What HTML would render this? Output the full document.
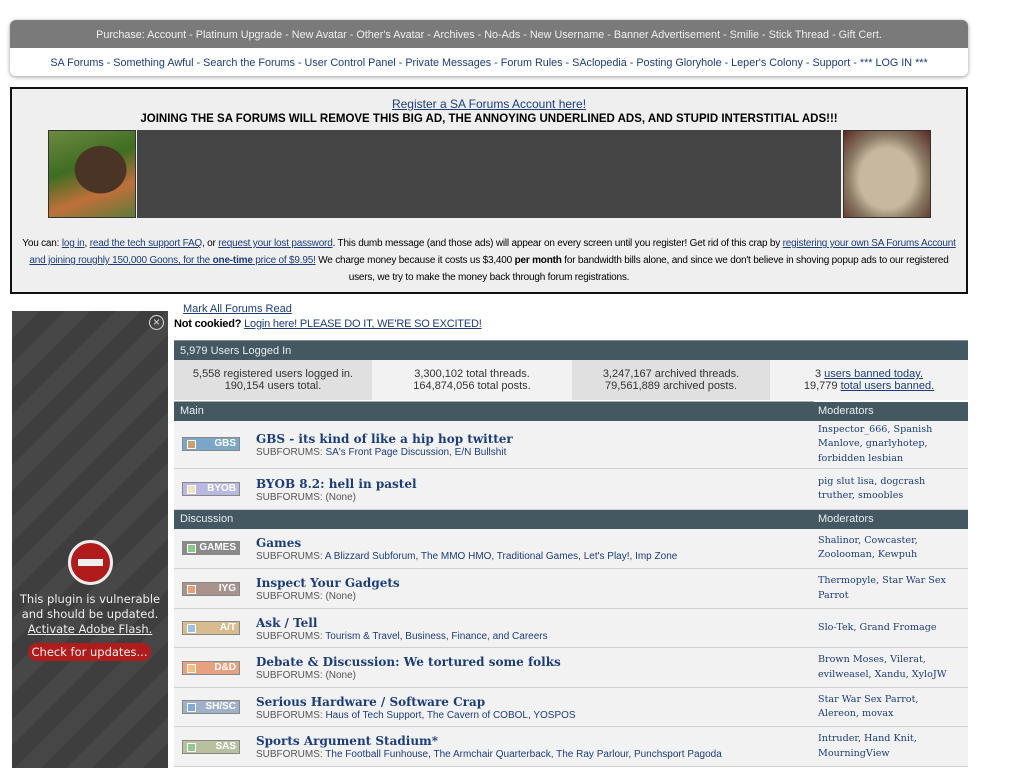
<!DOCTYPE html>
<html><head><meta charset="utf-8"><style>
*{margin:0;padding:0;box-sizing:border-box}
body{width:1024px;height:768px;overflow:hidden;background:#fff;font-family:"Liberation Sans",sans-serif;font-size:11px;color:#000;position:relative}
a{color:#1c3d7a}
.abs{position:absolute}
#nav{left:10px;top:20px;width:958px;height:56px;border-radius:6px;box-shadow:0 1px 4px rgba(0,0,0,.4);overflow:hidden}
#nav .t{height:28px;background:#7a7a7a;color:#f0f0f0;text-align:center;line-height:30px;font-size:10.8px}
#nav .b{height:28px;background:#fff;color:#1c3d7a;text-align:center;line-height:30px;font-size:10.8px}
#ad{left:10px;top:87px;width:958px;height:207px;border:2px solid #111;background:#efefef;text-align:center}
#ad p{font-size:10px;line-height:17px;padding:0 4px;letter-spacing:-0.2px}
#flash{left:12px;top:311px;width:156px;height:457px;background:repeating-linear-gradient(-45deg,#3e3e3e 0 18px,#474747 18px 36px);color:#eee;text-align:center}
table{border-collapse:collapse}
.hd{background:#445862;color:#e8eef0;height:19px;font-size:11px;padding-left:6px;text-align:left}
.icon{width:58px;height:14px;border:1px solid #888;display:inline-block;position:relative;color:#fff;font-weight:bold;font-size:10px;text-align:right;padding-right:3px;line-height:12px}
.icon i{position:absolute;left:4px;top:2px;width:9px;height:9px;border:1px solid #fff}
.ti{font-family:"DejaVu Serif",serif;font-weight:bold;font-size:12px;color:#1c3d7a;line-height:16px}
.sf{font-size:10px;color:#555}
.sf a{text-decoration:none}
.md{font-family:"DejaVu Serif",serif;font-size:9.6px;color:#1c3d7a;line-height:14.5px;background:#e2e2e2;padding:2px 12px 2px 4px}
tr.r td{border-bottom:1px solid #d0d0d0;background:#f2f2f2}
</style></head><body>
<div id="nav" class="abs">
<div class="t">Purchase: Account - Platinum Upgrade - New Avatar - Other's Avatar - Archives - No-Ads - New Username - Banner Advertisement - Smilie - Stick Thread - Gift Cert.</div>
<div class="b">SA Forums - Something Awful - Search the Forums - User Control Panel - Private Messages - Forum Rules - SAclopedia - Posting Gloryhole - Leper's Colony - Support - *** LOG IN ***</div>
</div>
<div id="ad" class="abs">
<div style="margin-top:8px;font-size:12px;line-height:15px"><a href="#">Register a SA Forums Account here!</a></div>
<div style="font-weight:bold;font-size:11.5px;line-height:15px">JOINING THE SA FORUMS WILL REMOVE THIS BIG AD, THE ANNOYING UNDERLINED ADS, AND STUPID INTERSTITIAL ADS!!!</div>
<div class="abs" style="left:36px;top:41px;width:88px;height:88px;border:1px solid #333;background:radial-gradient(ellipse at 60% 45%,#4a3426 0 35%,transparent 36%),linear-gradient(160deg,#6c8a40 0%,#3e6d22 40%,#c0703a 70%,#5e7a3a 100%)"></div>
<div class="abs" style="left:125px;top:41px;width:704px;height:88px;background:#454545"></div>
<div class="abs" style="left:831px;top:41px;width:88px;height:88px;border:1px solid #333;background:radial-gradient(ellipse at 50% 55%,#c9b8a0 0 45%,#8a7a64 65%,#5a2a20 100%)"></div>
<p style="margin-top:108px">You can: <a href="#">log in</a>, <a href="#">read the tech support FAQ</a>, or <a href="#">request your lost password</a>. This dumb message (and those ads) will appear on every screen until you register! Get rid of this crap by <a href="#">registering your own SA Forums Account<br>and joining roughly 150,000 Goons, for the <b>one-time</b> price of $9.95!</a> We charge money because it costs us $3,400 <b>per month</b> for bandwidth bills alone, and since we don't believe in shoving popup ads to our registered users, we try to make the money back through forum registrations.</p>
</div>
<div id="flash" class="abs">
<div class="abs" style="right:4px;top:4px;width:15px;height:15px;border:1.5px solid #ddd;border-radius:50%;font-size:12px;line-height:12px;color:#ddd">×</div>
<div class="abs" style="left:56px;top:229px;width:45px;height:45px;border-radius:50%;background:#b01c1c;border:3px solid #eee"><div style="margin:16px auto 0;width:25px;height:7px;background:#eee"></div></div>
<div class="abs" style="left:0;top:281px;width:156px;font-family:'DejaVu Sans',sans-serif;font-size:11.5px;line-height:15px">This plugin is vulnerable<br>and should be updated.<br><u>Activate Adobe Flash.</u></div>
<div class="abs" style="left:16px;top:332px;width:123px;height:18px;border-radius:9px;background:#b01c1c;font-family:'DejaVu Sans',sans-serif;font-size:11.5px;line-height:18px">Check for updates...</div>
</div>
<div class="abs" style="left:183px;top:303px;font-size:11px"><a href="#">Mark All Forums Read</a></div>
<div class="abs" style="left:174px;top:318px;font-size:11px;letter-spacing:-0.2px"><b>Not cookied?</b> <a href="#">Login here! PLEASE DO IT, WE'RE SO EXCITED!</a></div>
<div class="abs" style="left:174px;top:340px;width:794px">
<div class="hd" style="height:20px;line-height:20px;border-top:1px solid #889">5,979 Users Logged In</div>
<table style="width:794px;height:40px;text-align:center;font-size:11px;color:#333"><tr>
<td style="background:#e0e0e0;width:198px">5,558 registered users logged in.<br>190,154 users total.</td>
<td style="background:#f2f2f2;width:200px">3,300,102 total threads.<br>164,874,056 total posts.</td>
<td style="background:#e0e0e0;width:198px">3,247,167 archived threads.<br>79,561,889 archived posts.</td>
<td style="background:#f2f2f2">3 <a href="#">users banned today.</a><br>19,779 <a href="#">total users banned.</a></td></tr></table>
<table style="width:794px;margin-top:1px">
<tr><td colspan="2" class="hd" style="border-top:1px solid #aaa">Main</td><td class="hd" style="width:154px;padding-left:4px">Moderators</td></tr>
<tr class="r" style="height:48px"><td style="width:82px;padding-left:8px"><span class="icon" style="background:#7aa6c8"><i style="background:#c9a070"></i>GBS</span></td><td><div class="ti">GBS - its kind of like a hip hop twitter</div><div class="sf">SUBFORUMS: <a href="#">SA's Front Page Discussion</a>, <a href="#">E/N Bullshit</a></div></td><td class="md">Inspector_666, Spanish Manlove, gnarlyhotep, forbidden lesbian</td></tr>
<tr class="r" style="height:41px"><td style="padding-left:8px"><span class="icon" style="background:#b8b8e0"><i style="background:#f0e4c0"></i>BYOB</span></td><td><div class="ti">BYOB 8.2: hell in pastel</div><div class="sf">SUBFORUMS: (None)</div></td><td class="md">pig slut lisa, dogcrash truther, smoobles</td></tr>
<tr><td colspan="2" class="hd">Discussion</td><td class="hd" style="padding-left:4px">Moderators</td></tr>
<tr class="r" style="height:40px"><td style="padding-left:8px"><span class="icon" style="background:#8a8a8a"><i style="background:#8ac88a"></i>GAMES</span></td><td><div class="ti">Games</div><div class="sf">SUBFORUMS: <a href="#">A Blizzard Subforum, The MMO HMO, Traditional Games, Let's Play!, Imp Zone</a></div></td><td class="md">Shalinor, Cowcaster, Zoolooman, Kewpuh</td></tr>
<tr class="r" style="height:40px"><td style="padding-left:8px"><span class="icon" style="background:#a8948c"><i style="background:#e8a070"></i>IYG</span></td><td><div class="ti">Inspect Your Gadgets</div><div class="sf">SUBFORUMS: (None)</div></td><td class="md">Thermopyle, Star War Sex Parrot</td></tr>
<tr class="r" style="height:39px"><td style="padding-left:8px"><span class="icon" style="background:#d8bc90"><i style="background:#a0c0e0"></i>A/T</span></td><td><div class="ti">Ask / Tell</div><div class="sf">SUBFORUMS: <a href="#">Tourism &amp; Travel, Business, Finance, and Careers</a></div></td><td class="md">Slo-Tek, Grand Fromage</td></tr>
<tr class="r" style="height:40px"><td style="padding-left:8px"><span class="icon" style="background:#e8a080"><i style="background:#f0c080"></i>D&amp;D</span></td><td><div class="ti">Debate &amp; Discussion: We tortured some folks</div><div class="sf">SUBFORUMS: (None)</div></td><td class="md">Brown Moses, Vilerat, evilweasel, Xandu, XyloJW</td></tr>
<tr class="r" style="height:39px"><td style="padding-left:8px"><span class="icon" style="background:#a0b0c8"><i style="background:#80a8d8"></i>SH/SC</span></td><td><div class="ti">Serious Hardware / Software Crap</div><div class="sf">SUBFORUMS: <a href="#">Haus of Tech Support, The Cavern of COBOL, YOSPOS</a></div></td><td class="md">Star War Sex Parrot,<br>Alereon, movax</td></tr>
<tr class="r" style="height:40px"><td style="padding-left:8px"><span class="icon" style="background:#b8c0a0"><i style="background:#90c890"></i>SAS</span></td><td><div class="ti">Sports Argument Stadium*</div><div class="sf">SUBFORUMS: <a href="#">The Football Funhouse, The Armchair Quarterback, The Ray Parlour, Punchsport Pagoda</a></div></td><td class="md">Intruder, Hand Knit, MourningView</td></tr>
</table></div>
</body></html>
